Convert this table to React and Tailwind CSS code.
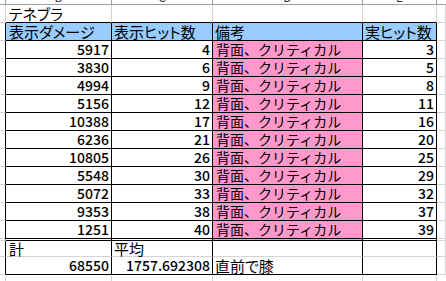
import React from "react";

const data = [
  [5917, 4, 3],
  [3830, 6, 5],
  [4994, 9, 8],
  [5156, 12, 11],
  [10388, 17, 16],
  [6236, 21, 20],
  [10805, 26, 25],
  [5548, 30, 29],
  [5072, 33, 32],
  [9353, 38, 37],
  [1251, 40, 39],
];

function DataRow({ d, last }) {
  const h = last ? "h-[20px]" : "h-[18px]";
  const bb = last ? "border-b-[3px] border-double border-b-black" : "border-b border-b-black";
  const gb = last ? "border-b-[3px] border-double border-b-[#d4d4d4]" : "border-b border-b-[#d4d4d4]";
  return (
    <div className={`flex ${h}`}>
      <div className={`w-[6px] shrink-0 border-r border-r-black ${gb}`} />
      <div className={`w-[106px] shrink-0 border-r border-r-black ${bb} flex items-end justify-end pr-[2px] pb-[1px] leading-[15px] font-medium`}>{d[0]}</div>
      <div className={`w-[101px] shrink-0 border-r border-r-black ${bb} flex items-end justify-end pr-[2px] pb-[1px] leading-[15px] font-medium`}>{d[1]}</div>
      <div className={`w-[150px] shrink-0 border-r border-r-black ${bb} bg-[#ff99cc] flex items-end pl-[3px] pb-[1px] leading-[15px] text-[14px] whitespace-nowrap [font-feature-settings:normal]`}>背面、クリティカル</div>
      <div className={`w-[74px] shrink-0 border-r border-r-black ${bb} flex items-end justify-end pr-[2px] pb-[1px] leading-[15px] font-medium`}>{d[2]}</div>
      <div className={`flex-1 border-r border-r-[#d4d4d4] ${gb}`} />
    </div>
  );
}

export default function App() {
  return (
    <div className="w-[446px] h-[281px] overflow-hidden bg-white text-black text-[14px] font-['Noto_Sans_CJK_JP',sans-serif] [font-feature-settings:'palt']">
      {/* column header strip (cut off) */}
      <div className="flex h-[5px] overflow-hidden">
        <div className="w-[6px] shrink-0 border-r border-b border-[#a0a0a0]" />
        <div className="w-[106px] shrink-0 border-r border-b border-[#a0a0a0] flex justify-center"><span className="text-[12px] leading-[12px] -mt-[9px] text-[#333]">B</span></div>
        <div className="w-[101px] shrink-0 border-r border-b border-[#a0a0a0] flex justify-center"><span className="text-[12px] leading-[12px] -mt-[9px] text-[#333]">C</span></div>
        <div className="w-[150px] shrink-0 border-r border-b border-[#a0a0a0] flex justify-center"><span className="text-[12px] leading-[12px] -mt-[9px] text-[#333]">D</span></div>
        <div className="w-[74px] shrink-0 border-r border-b border-[#a0a0a0] flex justify-center"><span className="text-[12px] leading-[12px] -mt-[9px] text-[#333]">E</span></div>
        <div className="flex-1 border-b border-[#a0a0a0]" />
      </div>
      {/* title row */}
      <div className="flex h-[18px]">
        <div className="w-[6px] shrink-0 border-r border-b border-[#d4d4d4]" />
        <div className="w-[106px] shrink-0 border-r border-r-[#d4d4d4] border-b border-b-black flex items-end pl-[3px] pb-[1px] leading-[15px] text-[15px] whitespace-nowrap">テネブラ</div>
        <div className="w-[101px] shrink-0 border-r border-r-[#d4d4d4] border-b border-b-black" />
        <div className="w-[150px] shrink-0 border-r border-r-[#d4d4d4] border-b border-b-black" />
        <div className="w-[74px] shrink-0 border-r border-r-[#d4d4d4] border-b border-b-black" />
        <div className="flex-1 border-r border-b border-[#d4d4d4]" />
      </div>
      {/* header row */}
      <div className="flex h-[18px] text-[15px]">
        <div className="w-[6px] shrink-0 border-r border-r-black border-b border-b-[#d4d4d4]" />
        <div className="w-[106px] shrink-0 border-r border-b border-black bg-[#99ccff] flex items-end pl-[3px] pb-[1px] leading-[15px] whitespace-nowrap">表示ダメージ</div>
        <div className="w-[101px] shrink-0 border-r border-b border-black bg-[#99ccff] flex items-end pl-[2px] pb-[1px] leading-[15px] whitespace-nowrap">表示ヒット数</div>
        <div className="w-[150px] shrink-0 border-r border-b border-black bg-[#99ccff] flex items-end pl-[2px] pb-[1px] leading-[15px] whitespace-nowrap">備考</div>
        <div className="w-[74px] shrink-0 border-r border-b border-black bg-[#99ccff] flex items-end pl-[2px] pb-[1px] leading-[15px] whitespace-nowrap">実ヒット数</div>
        <div className="flex-1 border-r border-b border-[#d4d4d4]" />
      </div>
      {data.map((d, i) => (
        <DataRow key={i} d={d} last={i === data.length - 1} />
      ))}
      {/* totals label row */}
      <div className="flex h-[16px] text-[15px]">
        <div className="w-[6px] shrink-0 border-r border-r-black border-b border-b-[#d4d4d4]" />
        <div className="w-[106px] shrink-0 border-r border-r-black border-b border-b-[#d4d4d4] flex items-end pl-[3px] leading-[15px]">計</div>
        <div className="w-[101px] shrink-0 border-r border-r-black border-b border-b-[#d4d4d4] flex items-end pl-[2px] leading-[15px]">平均</div>
        <div className="w-[150px] shrink-0 border-r border-r-black border-b border-b-[#d4d4d4]" />
        <div className="w-[74px] shrink-0 border-r border-r-black border-b border-b-[#d4d4d4]" />
        <div className="flex-1 border-r border-b border-[#d4d4d4]" />
      </div>
      {/* totals value row */}
      <div className="flex h-[18px]">
        <div className="w-[6px] shrink-0 border-r border-r-black border-b border-b-[#d4d4d4]" />
        <div className="w-[106px] shrink-0 border-r border-b border-black flex items-end justify-end pr-[2px] pb-[1px] leading-[15px] font-medium">68550</div>
        <div className="w-[101px] shrink-0 border-r border-b border-black flex items-end justify-end pr-[2px] pb-[1px] leading-[15px] whitespace-nowrap font-medium">1757.692308</div>
        <div className="w-[150px] shrink-0 border-r border-b border-black flex items-end pl-[2px] pb-[1px] leading-[15px] text-[15px] whitespace-nowrap">直前で膝</div>
        <div className="w-[74px] shrink-0 border-r border-b border-black" />
        <div className="flex-1 border-r border-b border-[#d4d4d4]" />
      </div>
      {/* filler row */}
      <div className="flex h-[7px]">
        <div className="w-[6px] shrink-0 border-r border-[#d4d4d4]" />
        <div className="w-[106px] shrink-0 border-r border-[#d4d4d4]" />
        <div className="w-[101px] shrink-0 border-r border-[#d4d4d4]" />
        <div className="w-[150px] shrink-0 border-r border-[#d4d4d4]" />
        <div className="w-[74px] shrink-0 border-r border-[#d4d4d4]" />
        <div className="flex-1" />
      </div>
    </div>
  );
}
